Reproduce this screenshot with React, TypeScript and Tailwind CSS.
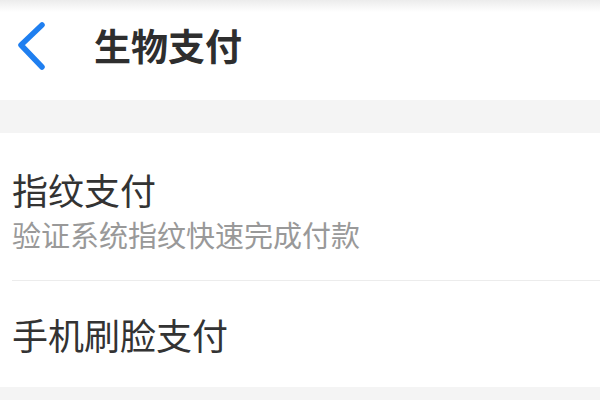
export default function App() {
  return (
    <div
      className="w-[600px] h-[400px] overflow-hidden bg-[#f4f4f4] flex flex-col"
      style={{ fontFamily: '"Noto Sans CJK SC", "Noto Sans", sans-serif' }}
    >
      {/* Navigation bar */}
      <header className="h-[100px] shrink-0 bg-[linear-gradient(to_bottom,#ececec,#ffffff_12px)] flex items-start">
        <div className="h-[90px] w-full flex items-center">
          <svg
            className="ml-[15px] shrink-0"
            width="34"
            height="50"
            viewBox="0 0 34 50"
            fill="none"
          >
            <path
              d="M27 5 L6 25 L27 47"
              stroke="#1f7ff0"
              strokeWidth="5.5"
              strokeLinecap="round"
              strokeLinejoin="round"
            />
          </svg>
          <h1 className="ml-[45px] text-[37px] leading-none font-bold text-[#2e2e2e]">
            生物支付
          </h1>
        </div>
      </header>

      {/* Section gap */}
      <div className="h-[33px] shrink-0" />

      {/* Settings list */}
      <div className="bg-white shrink-0">
        <div className="pl-[12px] pt-[38px] pb-[31px]">
          <div className="text-[36px] leading-[36px] text-[#333333]">指纹支付</div>
          <div className="mt-[13px] text-[29px] leading-[29px] text-[#999999]">
            验证系统指纹快速完成付款
          </div>
        </div>
        <div className="ml-[12px] h-px bg-[#ececec]" />
        <div className="h-[106px] pl-[12px] flex items-center">
          <div className="text-[36px] leading-[36px] text-[#333333]">手机刷脸支付</div>
        </div>
      </div>
    </div>
  );
}
